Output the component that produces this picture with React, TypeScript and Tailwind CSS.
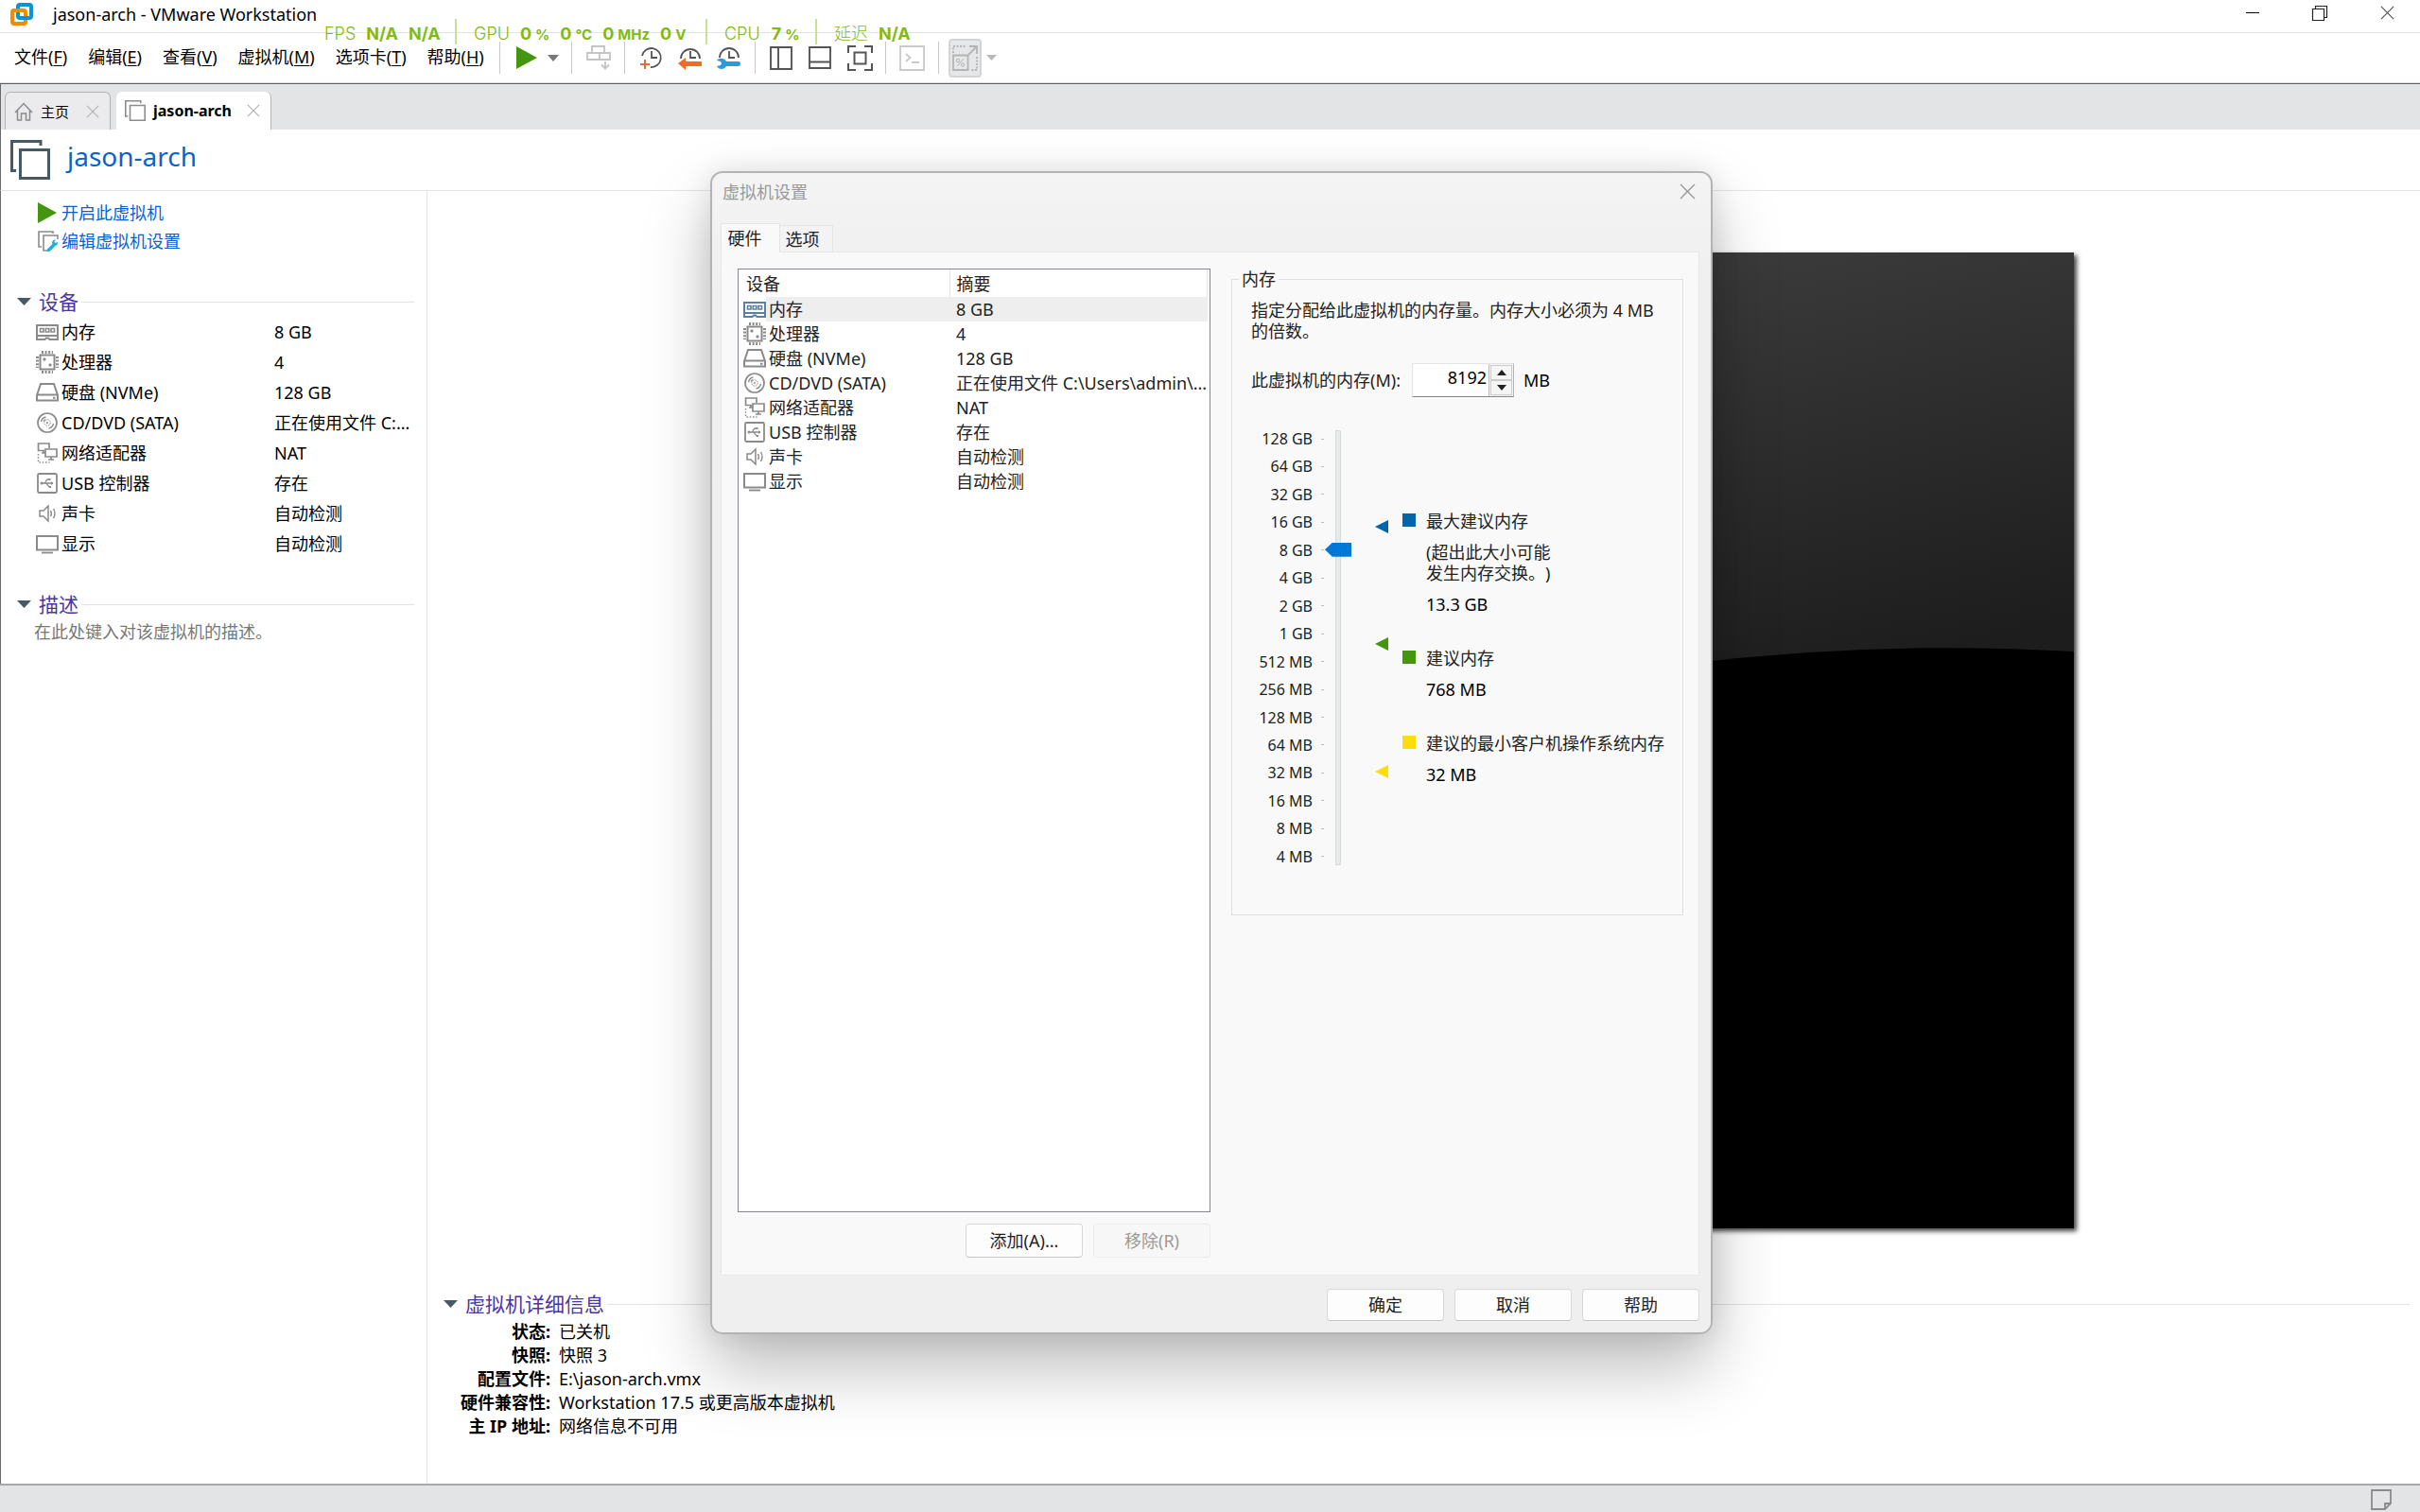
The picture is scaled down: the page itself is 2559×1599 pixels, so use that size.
import React from "react";

type IconProps = { className?: string };

const deviceIcons: Record<string, React.ReactNode> = {
  memory: (
    <>
      <path d="M1 5h22v11h-22z" />
      <path d="M1 16v4h8.500l1.500-1.500h2l1.500 1.500h8.500v-4" />
      <path d="M4.500 8.500h3.500v3.500h-3.500zM10.300 8.500h3.500v3.500h-3.500zM16 8.500h3.500v3.500h-3.500z" strokeWidth="1.600" />
    </>
  ),
  cpu: (
    <>
      <path d="M4.500 4.500h15v15h-15z" />
      <path d="M6 1.500h12M6 22.500h12" strokeWidth="3" strokeDasharray="2 1.600" />
      <path d="M1.500 6v12M22.500 6v12" strokeWidth="3" strokeDasharray="2 1.600" />
      <path d="M8 8h2v2h-2zM14 14h2v2h-2z" fill="currentColor" strokeWidth="1" />
    </>
  ),
  disk: (
    <>
      <path d="M1 15l4-12h14l4 12v5.500h-22z" />
      <path d="M1 14.500h22" />
      <path d="M18 17.800h2.500" />
    </>
  ),
  cd: (
    <>
      <circle cx="12" cy="12" r="10" strokeWidth="1.700" />
      <circle cx="12" cy="12" r="3.200" strokeWidth="1" strokeDasharray="1.500 1" />
      <circle cx="12" cy="12" r="1" fill="currentColor" stroke="none" />
      <path d="M5.500 11a6.500 6.500 0 0 1 5-5M18.500 13a6.500 6.500 0 0 1-5 5M8 10.500a4 4 0 0 1 2-2" strokeWidth="1.300" />
    </>
  ),
  network: (
    <>
      <path d="M9 9.500h-6.500v-7.500h11.500v5" strokeWidth="1.700" />
      <path d="M6 12h4M8 9v3" strokeWidth="1.700" />
      <path d="M10 8h12v8h-12z" strokeWidth="1.700" />
      <path d="M13 19h6M16 16v3" strokeWidth="1.700" />
      <path d="M2.500 13v9h12" strokeWidth="1.500" strokeDasharray="1.500 1.800" />
    </>
  ),
  usb: (
    <>
      <rect x="2" y="2" width="20" height="20" rx="1.500" strokeWidth="1.800" />
      <path d="M6 12h12M8.500 12c2 0 2-4 4-4h2M10.500 12c2 0 2 4 4 4h1" strokeWidth="1.300" />
      <path d="M16 10l2.500 2-2.500 2z" fill="currentColor" stroke="none" />
      <circle cx="6" cy="12" r="1.500" fill="currentColor" stroke="none" />
      <path d="M13.500 7h2v2h-2zM14 15h2v2h-2z" fill="currentColor" stroke="none" />
    </>
  ),
  sound: (
    <>
      <path d="M4 9h4l5-5v16l-5-5h-4z" strokeWidth="1.500" />
      <path d="M15.500 9q1.800 3 0 6M18.500 7q3 5 0 10" strokeWidth="1.400" />
    </>
  ),
  display: (
    <>
      <path d="M1 4h22v14.500h-22z" />
      <path d="M6 21.500h12" strokeWidth="1.800" />
    </>
  ),
};

function DeviceIcon({ name, className }: { name: string; className: string }) {
  return (
    <svg viewBox="0 0 24 24" fill="none" stroke="currentColor" strokeWidth="2" aria-hidden="true" className={className}>
      {deviceIcons[name]}
    </svg>
  );
}

const devices = [
  { icon: "memory", name: "内存", value: "8 GB" },
  { icon: "cpu", name: "处理器", value: "4" },
  { icon: "disk", name: "硬盘 (NVMe)", value: "128 GB" },
  { icon: "cd", name: "CD/DVD (SATA)", value: "正在使用文件 C:...", long: "正在使用文件 C:\\Users\\admin\\..." },
  { icon: "network", name: "网络适配器", value: "NAT" },
  { icon: "usb", name: "USB 控制器", value: "存在" },
  { icon: "sound", name: "声卡", value: "自动检测" },
  { icon: "display", name: "显示", value: "自动检测" },
];

const menus = [
  ["文件", "F"],
  ["编辑", "E"],
  ["查看", "V"],
  ["虚拟机", "M"],
  ["选项卡", "T"],
  ["帮助", "H"],
];

const details = [
  ["状态:", "已关机"],
  ["快照:", "快照 3"],
  ["配置文件:", "E:\\jason-arch.vmx"],
  ["硬件兼容性:", "Workstation 17.5 或更高版本虚拟机"],
  ["主 IP 地址:", "网络信息不可用"],
];

const sizes = [
  "128 GB", "64 GB", "32 GB", "16 GB", "8 GB", "4 GB", "2 GB", "1 GB",
  "512 MB", "256 MB", "128 MB", "64 MB", "32 MB", "16 MB", "8 MB", "4 MB",
];

function Windows({ className }: IconProps) {
  return (
    <svg viewBox="0 0 42 42" fill="none" stroke="currentColor" strokeWidth="3" aria-hidden="true" className={className}>
      <path d="M32 6v-4.500h-30.500v31h4.500" />
      <path d="M10.500 10.500h30v30h-30z" />
    </svg>
  );
}

function Cross({ className }: IconProps) {
  return (
    <svg viewBox="0 0 16 16" fill="none" stroke="currentColor" strokeWidth="1.300" aria-hidden="true" className={className}>
      <path d="M1 1l14 14M15 1l-14 14" />
    </svg>
  );
}

function Play({ className }: IconProps) {
  return (
    <svg viewBox="0 0 22 24" fill="#45960f" aria-hidden="true" className={className}>
      <path d="M0 0l22 12-22 12z" />
    </svg>
  );
}

function Caret({ className }: IconProps) {
  return (
    <svg viewBox="0 0 14 8" fill="currentColor" preserveAspectRatio="none" aria-hidden="true" className={className}>
      <path d="M0 0h14l-7 8z" />
    </svg>
  );
}

function Clock({ children, d }: { children: React.ReactNode; d: string }) {
  return (
    <svg viewBox="0 0 25 26" fill="none" stroke="#555" strokeWidth="1.800" aria-hidden="true" className="h-[26px] w-[25px]">
      <path d={d} />
      <path d="M13 6v7h6" />
      {children}
    </svg>
  );
}

function SectionHead({ title }: { title: string }) {
  return (
    <h2 className="flex h-[30px] items-center text-[21px] text-[#4a35a8]">
      <button type="button" className="flex items-center gap-2">
        <Caret className="h-2 w-[15px] text-[#465a66]" />
        {title}
      </button>
      <span className="ml-[3px] h-px flex-1 bg-[#e1e2e4]" />
    </h2>
  );
}

function StatValue({ n, unit }: { n: string; unit: string }) {
  return (
    <span className="flex items-baseline gap-1 font-bold">
      {n}
      <span className="text-[15px]">{unit}</span>
    </span>
  );
}

function PerfOverlay() {
  return (
    <div className="pointer-events-none absolute left-[343px] top-5 flex whitespace-nowrap font-['Inter','Noto_Sans_CJK_SC',sans-serif] text-[18px] leading-[22px] text-[#7fbb12]">
      <div className="flex h-[27px] w-[138px] items-baseline gap-[11px] pt-[5px]">
        <span className="font-light">FPS</span>
        <b>N/A</b>
        <b>N/A</b>
      </div>
      <div className="flex h-[27px] w-[265px] items-baseline gap-[11px] border-l-2 border-[#c5e297] pl-[18px] pt-[5px]">
        <span className="font-light">GPU</span>
        <StatValue n="0" unit="%" />
        <StatValue n="0" unit="°C" />
        <StatValue n="0" unit="MHz" />
        <StatValue n="0" unit="V" />
      </div>
      <div className="flex h-[27px] w-[116px] items-baseline gap-3 border-l-2 border-[#c5e297] pl-[18px] pt-[5px]">
        <span className="font-light">CPU</span>
        <StatValue n="7" unit="%" />
      </div>
      <div className="flex h-[27px] items-baseline gap-[11px] border-l-2 border-[#c5e297] pl-[18px] pt-[5px]">
        <span className="font-light">延迟</span>
        <b>N/A</b>
      </div>
    </div>
  );
}

function Toolbar() {
  const group = "flex h-[34px] items-center border-l border-[#c8c8c8]";
  return (
    <div className="flex items-center pb-px" role="toolbar" aria-label="工具栏">
      <div className={group + " w-[76px] gap-[11px] pl-[17px]"}>
        <button type="button" aria-label="开机"><Play className="h-6 w-[22px]" /></button>
        <button type="button" aria-label="电源选项"><Caret className="h-[7px] w-3 text-[#777]" /></button>
      </div>
      <div className={group + " w-14 justify-center"}>
        <button type="button" aria-label="发送按键" disabled>
          <svg viewBox="0 0 26 26" fill="none" stroke="#c4c4c4" strokeWidth="1.800" className="h-[26px] w-[26px]">
            <path d="M6 1h13v7h-13zM1 8h24v7h-24zM14 8v7M20 17v7M16 20.500l4 4 4-4" />
          </svg>
        </button>
      </div>
      <div className={group + " w-[138px] gap-4 pl-[15px]"}>
        <button type="button" aria-label="拍摄快照">
          <Clock d="M3 11a10 10 0 1 1 9 12">
            <path d="M6 15v10M1 20h10" stroke="#e0703a" strokeWidth="2" />
          </Clock>
        </button>
        <button type="button" aria-label="恢复快照">
          <Clock d="M3 14a10 10 0 1 1 20 0">
            <path d="M0 19l8-6v4h17v5h-17v4z" fill="#ff671f" stroke="none" />
          </Clock>
        </button>
        <button type="button" aria-label="管理快照">
          <Clock d="M3 13a10 10 0 1 1 20 0">
            <path d="M0 16l4 1 1 2-1 2-4 1c2 4 8 4 10 0h13q2 0 2-2.500t-2-2.500h-13c-2-4-8-4-10-1z" fill="#2b9be0" stroke="none" />
          </Clock>
        </button>
      </div>
      <div className={group + " w-[138px] gap-[17px] pl-[15px] text-[#555]"}>
        <button type="button" aria-label="显示库">
          <svg viewBox="0 0 24 25" fill="none" stroke="currentColor" strokeWidth="1.900" className="h-[25px] w-6">
            <path d="M1 1h22v23h-22zM9 1v23" />
          </svg>
        </button>
        <button type="button" aria-label="显示缩略图">
          <svg viewBox="0 0 24 25" fill="none" stroke="currentColor" strokeWidth="1.900" className="h-[25px] w-6">
            <path d="M1 1h22v22h-22zM1 16.500h22" />
          </svg>
        </button>
        <button type="button" aria-label="全屏">
          <svg viewBox="0 0 27 27" fill="none" stroke="currentColor" strokeWidth="2" className="h-[27px] w-[27px]">
            <path d="M1 8v-7h8M18 1h8v7M26 19v7h-8M9 26h-8v-7M7.500 7.500h12v12h-12z" />
          </svg>
        </button>
      </div>
      <div className={group + " w-14 justify-center"}>
        <button type="button" aria-label="控制台" disabled>
          <svg viewBox="0 0 27 27" fill="none" stroke="#c9c9c9" strokeWidth="1.800" className="h-[27px] w-[27px]">
            <path d="M1 1h25v25h-25zM7 9l4.500 4-4.500 4M13 18h8" />
          </svg>
        </button>
      </div>
      <div className={group + " gap-[5px] pl-2.5"}>
        <button type="button" aria-label="拉伸" disabled className="flex h-[41px] w-[35px] items-center justify-center rounded-[4px] border-2 border-[#d2d4d6] bg-[#e6e7e8]">
          <svg viewBox="0 0 27 27" fill="none" stroke="#b4b4b4" strokeWidth="1.800" className="h-[27px] w-[27px]">
            <path d="M1 8v-7h14M26 12v14h-7" strokeDasharray="2 1.500" />
            <path d="M1 10.500h15.500v15.500h-15.500zM17 10l9-9M18 1h8v8" />
            <path d="M5 22l7-8" strokeWidth="1" />
            <circle cx="6" cy="16" r="1.700" strokeWidth="1" />
            <circle cx="11" cy="20.500" r="1.700" strokeWidth="1" />
          </svg>
        </button>
        <button type="button" aria-label="拉伸选项" disabled><Caret className="h-[6px] w-[11px] text-[#b9b9b9]" /></button>
      </div>
    </div>
  );
}

function Swatch({ color, title, note, value }: { color: string; title: string; note?: React.ReactNode; value: string }) {
  return (
    <div className="grid grid-cols-[14px_auto] gap-x-[11px] gap-y-[11px]">
      <span className={"mt-[3px] h-3.5 w-3.5 " + color} />
      <dt>{title}</dt>
      {note && <dd className="col-start-2">{note}</dd>}
      <dd className="col-start-2 text-black">{value}</dd>
    </div>
  );
}

function MemoryPanel() {
  return (
    <fieldset className="h-[684px] w-[478px] shrink-0 border border-[#dfdfdf]">
      <legend className="ml-[7px] px-[3px]">内存</legend>
      <div className="pl-5 pt-[11px]">
        <p className="pr-5">指定分配给此虚拟机的内存量。内存大小必须为 4 MB 的倍数。</p>
        <div className="mt-[23px] flex h-9 items-center">
          <label htmlFor="mem" className="w-[170px]">此虚拟机的内存(M):</label>
          <div className="flex h-9 w-[108px] border border-[#e3e3e3] border-b-[#858585] border-r-[#b4b4b4] bg-white">
            <input id="mem" type="text" defaultValue="8192" className="min-w-0 flex-1 pb-[6px] pr-[2px] text-right text-black outline-none" />
            <div className="flex w-[26px] flex-col border-l border-[#bbb] bg-[#f5f5f5] p-px">
              <button type="button" aria-label="增加" className="flex flex-1 items-center justify-center border border-[#ccc]">
                <Caret className="h-[6px] w-[10px] rotate-180 text-[#222]" />
              </button>
              <button type="button" aria-label="减少" className="flex flex-1 items-center justify-center border border-[#ccc]">
                <Caret className="h-[6px] w-[10px] text-[#222]" />
              </button>
            </div>
          </div>
          <span className="ml-2.5 text-black">MB</span>
        </div>
        <div className="mt-[35px] flex h-[460px]">
          <ul className="flex w-[77px] flex-col justify-between text-right text-[16px] leading-[18px]">
            {sizes.map((s) => (
              <li key={s} className="flex items-center justify-end gap-[9px] whitespace-nowrap">
                {s}
                <span className="h-px w-[3px] bg-[#bcbcbc]" />
              </li>
            ))}
          </ul>
          <div className="relative ml-px flex w-7 justify-center">
            <span className="w-[6px] border border-[#d9dbdb] bg-[#e7eaea]" />
            <input
              type="range"
              min={0}
              max={15}
              defaultValue={11}
              aria-label="内存大小"
              className="absolute inset-0 h-full w-7 appearance-none bg-transparent [direction:rtl] [writing-mode:vertical-lr] [&::-webkit-slider-thumb]:h-[15px] [&::-webkit-slider-thumb]:w-7 [&::-webkit-slider-thumb]:appearance-none [&::-webkit-slider-thumb]:bg-[#0078d7] [&::-webkit-slider-thumb]:[clip-path:polygon(0_50%,28%_0,100%_0,100%_100%,28%_100%)]"
            />
          </div>
          <svg viewBox="0 0 14 460" aria-hidden="true" className="ml-[25px] h-[460px] w-3.5">
            <path d="M14 95v14l-14-7z" fill="#0065ab" />
            <path d="M14 219v14l-14-7z" fill="#45960f" />
            <path d="M14 354v14l-14-7z" fill="#ffdc0b" />
          </svg>
          <dl className="ml-[15px] flex flex-col gap-[35px] whitespace-nowrap pt-[85px]">
            <Swatch
              color="bg-[#0065ab]"
              title="最大建议内存"
              note={<>(超出此大小可能<br />发生内存交换。)</>}
              value="13.3 GB"
            />
            <Swatch color="bg-[#45960f]" title="建议内存" value="768 MB" />
            <Swatch color="bg-[#ffdc0b]" title="建议的最小客户机操作系统内存" value="32 MB" />
          </dl>
        </div>
      </div>
    </fieldset>
  );
}

function DialogButton({ children, tall, disabled }: { children: React.ReactNode; tall?: boolean; disabled?: boolean }) {
  return (
    <button
      type="button"
      disabled={disabled}
      className={
        "w-[124px] rounded-[4px] border " +
        (tall ? "h-9 " : "h-[34px] ") +
        (disabled
          ? "border-[#ebebeb] bg-[#f7f7f7] text-[#9b9b9b]"
          : "border-[#d8d8d8] border-b-[#c4c4c4] bg-[#fdfdfd] text-[#222]")
      }
    >
      {children}
    </button>
  );
}

function SettingsDialog() {
  return (
    <div
      role="dialog"
      aria-label="虚拟机设置"
      className="w-[1060px] rounded-[13px] border-2 border-[#b3b3b3] bg-linear-to-b from-[#f4f4f4] to-[#efefef] to-10% bg-clip-padding pb-3 text-[18px] leading-[22px] text-[#222] shadow-[0_36px_70px_rgba(0,0,0,0.26),0_0_30px_rgba(0,0,0,0.1)] [text-spacing-trim:space-all]"
    >
      <div className="flex h-[39px] items-center justify-between pl-[11px] pr-4 text-[#999]">
        <h1>虚拟机设置</h1>
        <button type="button" aria-label="关闭"><Cross className="h-[17px] w-[17px]" /></button>
      </div>
      <div className="mx-[9px] mr-3">
        <div role="tablist" className="flex h-11 items-end">
          <button type="button" role="tab" aria-selected="true" className="relative -mb-px h-[31px] w-[63px] border border-b-0 border-[#e5e5e5] bg-[#f9f9f9] pr-3">硬件</button>
          <button type="button" role="tab" aria-selected="false" className="h-7 w-14 border border-b-0 border-l-0 border-[#e5e5e5] bg-[#f3f3f3] pr-2">选项</button>
        </div>
        <div className="flex gap-[22px] border border-[#e8e8e8] bg-[#f9f9f9] pb-[18px] pl-[17px] pt-[17px]">
          <div className="w-[500px]">
            <div className="h-[998px] border border-[#828790] bg-white pr-[2px]">
              <table className="w-full table-fixed border-collapse text-left">
                <thead>
                  <tr className="h-[29px]">
                    <th className="w-[223px] border-r border-[#e5e5e5] pl-2 font-normal">设备</th>
                    <th className="border-r border-[#e5e5e5] pl-[7px] font-normal">摘要</th>
                  </tr>
                </thead>
                <tbody>
                  {devices.map((d, i) => (
                    <tr key={d.name} className="h-[26px]">
                      <td className="p-0 pl-[5px]">
                        <div className="flex h-[26px] items-center">
                          <DeviceIcon name={d.icon} className={i === 0 ? "h-6 w-6 text-[#5b7f9d]" : "h-6 w-6 text-[#8a8a8a]"} />
                          <span className={"flex h-[26px] flex-1 items-center whitespace-nowrap pl-[3px] " + (i === 0 ? "bg-[#eeeeee]" : "")}>{d.name}</span>
                        </div>
                      </td>
                      <td className={"whitespace-nowrap p-0 pl-[7px] " + (i === 0 ? "bg-[#eeeeee]" : "")}>{d.long ?? d.value}</td>
                    </tr>
                  ))}
                </tbody>
              </table>
            </div>
            <div className="mt-3 flex justify-end gap-[11px]">
              <DialogButton tall>添加(A)...</DialogButton>
              <DialogButton tall disabled>移除(R)</DialogButton>
            </div>
          </div>
          <MemoryPanel />
        </div>
        <div className="mt-3.5 flex justify-end gap-[11px]">
          <DialogButton>确定</DialogButton>
          <DialogButton>取消</DialogButton>
          <DialogButton>帮助</DialogButton>
        </div>
      </div>
    </div>
  );
}

export default function App() {
  return (
    <div className="relative flex min-h-screen flex-col overflow-hidden bg-white font-['Noto_Sans','Noto_Sans_CJK_SC',sans-serif] text-[18px] leading-6 text-black">
      <header className="flex h-[35px] items-start justify-between border-b border-[#e3e3e3] pl-[11px]">
        <div className="flex h-[29px] items-center gap-[21px]">
          <svg viewBox="0 0 24 24" fill="none" strokeWidth="4" aria-hidden="true" className="h-6 w-6">
            <rect x="8" y="2" width="14" height="14" rx="2" stroke="#0a95d2" />
            <rect x="2" y="8" width="14" height="14" rx="2" stroke="#f38b00" />
            <path d="M12 16h6" stroke="#0a95d2" />
          </svg>
          <span>jason-arch - VMware Workstation</span>
        </div>
        <div className="flex h-[27px] items-center gap-[55px] pr-[27px]">
          <button type="button" aria-label="最小化">
            <svg viewBox="0 0 14 14" stroke="#000" className="h-3.5 w-3.5"><path d="M0 6.500h14" /></svg>
          </button>
          <button type="button" aria-label="还原">
            <svg viewBox="0 0 18 18" fill="none" stroke="#222" strokeWidth="1.200" className="h-[18px] w-[18px]">
              <path d="M4.500 4v-2.500h12v12h-3M1.500 4.500h12v12h-12z" />
            </svg>
          </button>
          <button type="button" aria-label="关闭"><Cross className="h-[15px] w-[15px] text-[#555]" /></button>
        </div>
      </header>

      <div className="flex h-[54px] items-center border-b border-[#5f6163] shadow-[inset_0_-1px_0_#dcdcdc]">
        <nav className="flex w-[528px] items-center gap-[22px] pb-1 pl-[15px]">
          {menus.map(([label, key]) => (
            <button key={key} type="button" className="whitespace-nowrap">
              {label}(<u className="underline-offset-2">{key}</u>)
            </button>
          ))}
        </nav>
        <Toolbar />
      </div>

      <div role="tablist" className="flex h-12 items-end gap-[6px] border-l border-[#6a6a6a] bg-[#e3e4e6] pl-1 text-[16px]">
        <div className="flex h-10 w-28 items-center rounded-t-[6px] border border-b-0 border-[#b2b3b5] bg-[#ebebed] pl-[9px] pr-[11px]">
          <svg viewBox="0 0 20 20" fill="none" stroke="#8b8b8b" strokeWidth="1.500" aria-hidden="true" className="h-5 w-5">
            <path d="M1 11l9-9.500 9 9.500M3.500 9v10h4v-7h5v7h4v-10" />
          </svg>
          <button type="button" role="tab" aria-selected="false" className="ml-2 flex-1 text-left text-[15px]">主页</button>
          <button type="button" aria-label="关闭标签"><Cross className="h-3.5 w-3.5 text-[#b0b0b0]" /></button>
        </div>
        <div className="flex h-10 w-[164px] items-center rounded-t-[6px] border-r border-[#b2b3b5] bg-white pl-[9px] pr-[11px]">
          <Windows className="h-[22px] w-[22px] text-[#8b8b8b]" />
          <button type="button" role="tab" aria-selected="true" className="ml-2 flex-1 text-left font-bold">jason-arch</button>
          <button type="button" aria-label="关闭标签"><Cross className="h-3.5 w-3.5 text-[#b0b0b0]" /></button>
        </div>
      </div>

      <div className="flex h-[65px] items-center gap-[18px] border-b border-l border-b-[#e3e4e6] border-l-[#6a6a6a] pl-[10px]">
        <Windows className="h-[42px] w-[42px] text-[#465a66]" />
        <h1 className="pb-2 text-[28px] leading-9 text-[#0a62cf]">jason-arch</h1>
      </div>

      <main className="flex flex-1 border-l border-[#6a6a6a]">
        <aside className="w-[451px] shrink-0 border-r border-[#e3e4e6] pr-[13px] pt-2">
          <ul className="pl-[39px] text-[#0a62cf]">
            <li className="flex h-[30px] items-center">
              <a href="#power" className="flex items-center gap-[5px]">
                <Play className="h-[22px] w-[20px]" />
                开启此虚拟机
              </a>
            </li>
            <li className="flex h-[30px] items-center">
              <a href="#edit" className="flex items-center gap-[3px]">
                <svg viewBox="0 0 22 22" fill="none" stroke="#8b8b8b" strokeWidth="1.600" aria-hidden="true" className="h-[22px] w-[22px]">
                  <path d="M16 3v-2h-15v16h3M10 21h-4v-16h15v4" />
                  <path d="M11.500 20.500l6-6" stroke="#17b3da" strokeWidth="3.500" strokeLinecap="round" />
                  <path d="M15 13c0-2 2-4 4-3.500l-1.500 2 1 1.500 2.500-1c.5 2.500-1.500 4.500-4 4z" fill="#17b3da" stroke="none" />
                </svg>
                编辑虚拟机设置
              </a>
            </li>
          </ul>
          <section className="mt-[34px] pl-[17px]">
            <SectionHead title="设备" />
            <table className="mt-px w-full table-fixed border-collapse">
              <tbody>
                {devices.map((d) => (
                  <tr key={d.name} className="h-8">
                    <td className="w-[272px] p-0 pl-5">
                      <div className="flex items-center gap-[3px]">
                        <DeviceIcon name={d.icon} className="h-6 w-6 text-[#8a8a8a]" />
                        {d.name}
                      </div>
                    </td>
                    <td className="whitespace-nowrap p-0">{d.value}</td>
                  </tr>
                ))}
              </tbody>
            </table>
          </section>
          <section className="mt-[33px] pl-[17px]">
            <SectionHead title="描述" />
            <p className="pl-[18px] leading-7 text-[#777]">在此处键入对该虚拟机的描述。</p>
          </section>
        </aside>

        <div className="flex min-w-0 flex-1 flex-col justify-between pb-12 pt-[65px]">
          <svg
            viewBox="0 0 1374 1032"
            preserveAspectRatio="none"
            aria-label="虚拟机屏幕"
            className="h-[1032px] w-[1374px] self-center shadow-[3px_3px_5px_rgba(0,0,0,0.75)]"
          >
            <defs>
              <linearGradient id="sheen" gradientUnits="userSpaceOnUse" x1="960" y1="-20" x2="1080" y2="460">
                <stop offset="0" stopColor="#3d3d3d" />
                <stop offset="1" stopColor="#1d1d1d" />
              </linearGradient>
            </defs>
            <path d="M0 0h1374v1032h-1374z" fill="#000" />
            <path d="M0 757Q687 382 1374 422V0H0z" fill="url(#sheen)" />
          </svg>
          <section className="pl-[17px] pr-[11px]">
            <SectionHead title="虚拟机详细信息" />
            <dl className="mt-[2px] grid grid-cols-[113px_auto] gap-x-[9px] whitespace-nowrap leading-[25px]">
              {details.map(([k, v]) => (
                <React.Fragment key={k}>
                  <dt className="text-right font-bold">{k}</dt>
                  <dd>{v}</dd>
                </React.Fragment>
              ))}
            </dl>
          </section>
        </div>
      </main>

      <footer className="flex h-[30px] items-start justify-end border-t-2 border-[#a8a8a8] bg-[#e3e4e6] pr-[30px] pt-1">
        <svg viewBox="0 0 22 22" fill="none" stroke="#8b8b8b" strokeWidth="1.800" aria-hidden="true" className="h-[22px] w-[22px]">
          <path d="M1 1h20v14l-6 6h-14zM15 21v-6h6" />
        </svg>
      </footer>

      <PerfOverlay />
      <div className="absolute inset-x-0 top-[181px] flex justify-center pl-[3px]">
        <SettingsDialog />
      </div>
    </div>
  );
}
